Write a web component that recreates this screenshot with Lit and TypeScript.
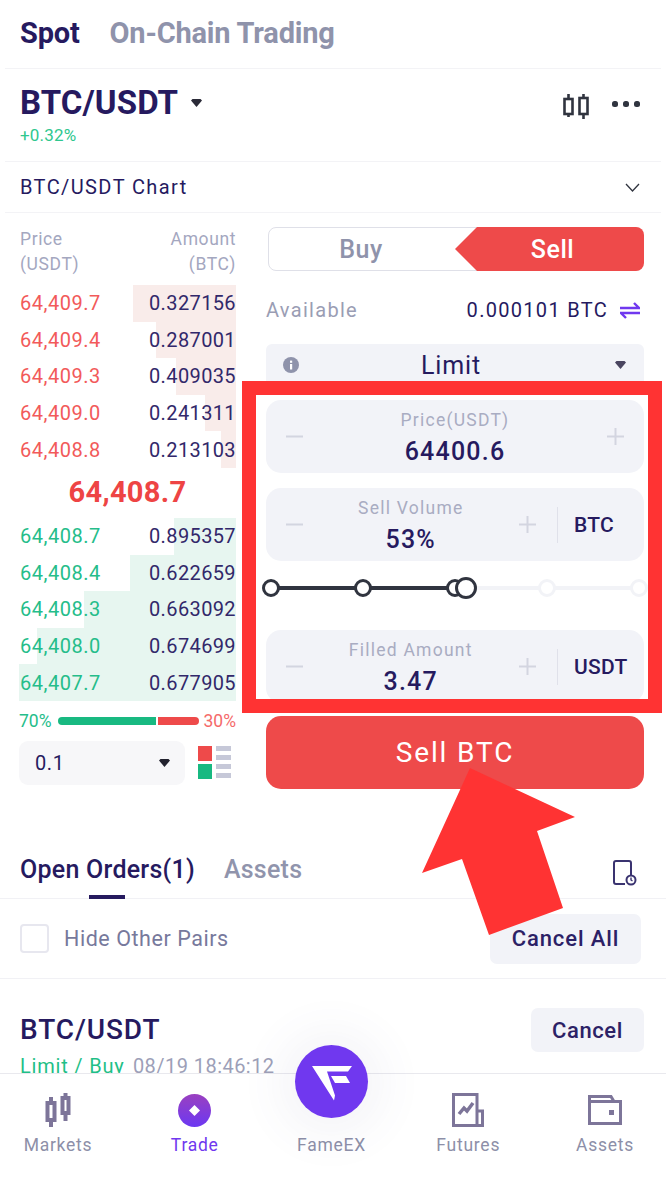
import { LitElement, html, css, svg } from "lit";
import { customElement } from "lit/decorators.js";

const asks = [
  ["64,409.7", "0.327156", 103],
  ["64,409.4", "0.287001", 80],
  ["64,409.3", "0.409035", 60],
  ["64,409.0", "0.241311", 31],
  ["64,408.8", "0.213103", 15],
];
const bids = [
  ["64,408.7", "0.895357", 62],
  ["64,408.4", "0.622659", 106],
  ["64,408.3", "0.663092", 152],
  ["64,408.0", "0.674699", 199],
  ["64,407.7", "0.677905", 217],
];
const stops = [
  [0, true],
  [92, true],
  [184, true],
  [276, false],
  [368, false],
];

const candle = (c: string, w: number) => svg`
  <g fill="none" stroke=${c} stroke-width=${w}>
    <rect x="1.500" y="10" width="8" height="15" />
    <rect x="16.500" y="9" width="8" height="16" />
    <path d="M5.500 5v5M5.500 25v3M20.500 5v4M20.500 25v5" />
  </g>`;

@customElement("app-root")
export class AppRoot extends LitElement {
  static styles = css`
    :host {
      display: block;
      position: relative;
      width: 666px;
      height: 1178px;
      overflow: hidden;
      background: #fff;
      font-family: Roboto, "Liberation Sans", sans-serif;
      color: #261a5f;
    }
    .tabs {
      height: 68px;
      display: flex;
      align-items: center;
      gap: 30px;
      padding: 0 20px 2px;
      box-sizing: border-box;
      font-size: 29px;
      font-weight: 700;
      color: #8f93ab;
      letter-spacing: -0.2px;
    }
    .tabs .on { color: #261a5f; }
    .div { height: 1px; background: #f3f3f6; margin: 0 5px; }
    .pair {
      height: 92px;
      box-sizing: border-box;
      padding: 15px 26px 0 20px;
      display: flex;
      justify-content: space-between;
    }
    .pair h1 {
      margin: 0;
      font-size: 33px;
      line-height: 38px;
      font-weight: 700;
      display: flex;
      align-items: center;
      gap: 13px;
      letter-spacing: 0.1px;
    }
    .change { font-size: 17px; line-height: 22px; color: #2fc78f; margin-top: 2px; letter-spacing: 0.2px; }
    .pair-icons { display: flex; align-items: center; gap: 22px; height: 38px; padding-top: 1px; }
    .chart {
      height: 50px;
      display: flex;
      align-items: center;
      justify-content: space-between;
      padding: 0 26px 0 20px;
      font-size: 20px;
      letter-spacing: 1.4px;
    }
    .main {
      display: grid;
      grid-template-columns: 217px 378px;
      column-gap: 30px;
      padding: 0 0 0 19px;
      height: 632px;
    }
    .book-head {
      height: 72px;
      box-sizing: border-box;
      padding-top: 14px;
      padding-left: 1px;
      display: flex;
      justify-content: space-between;
      font-size: 17.5px;
      line-height: 25px;
      color: #a4a7bf;
      letter-spacing: 0.6px;
    }
    .book-head div:last-child { text-align: right; }
    .row {
      position: relative;
      height: 36.6px;
      padding-left: 1px;
      display: flex;
      align-items: center;
      justify-content: space-between;
      font-size: 20px;
    }
    .row span { position: relative; }
    .bar { position: absolute; top: 0; right: 0; bottom: 0; }
    .ask .bar { background: #f9ecea; }
    .bid .bar { background: #e7f6f0; }
    .ask .p { color: #f25a5a; letter-spacing: 0.5px; }
    .bid .p { color: #25bd8a; letter-spacing: 0.5px; }
    .q { color: #32286a; letter-spacing: 0.38px; }
    .mid {
      height: 50px;
      box-sizing: border-box;
      padding-top: 3px;
      font-size: 29px;
      font-weight: 700;
      line-height: 42px;
      text-align: center;
      color: #ee4444;
      letter-spacing: 0.3px;
    }
    .ratio {
      height: 40px;
      display: flex;
      align-items: center;
      justify-content: space-between;
      font-size: 17.5px;
    }
    .ratio .g { color: #25bd8a; }
    .ratio .r { color: #f56a6a; }
    .ratio-bar { display: flex; gap: 2px; width: 141px; height: 8px; margin-left: 1px; }
    .ratio-bar i:first-child { flex: 98; background: #18b981; border-radius: 4px 0 0 4px; }
    .ratio-bar i:last-child { flex: 41; background: #ee4a4a; border-radius: 0 4px 4px 0; }
    .depth { display: flex; align-items: center; justify-content: space-between; height: 44px; padding-right: 5px; }
    .select {
      width: 166px;
      height: 44px;
      box-sizing: border-box;
      border-radius: 9px;
      background: #f7f7f9;
      display: flex;
      align-items: center;
      justify-content: space-between;
      padding: 0 15px 0 16px;
      font-size: 20px;
      letter-spacing: 0.6px;
    }
    .toggle {
      margin-top: 14px;
      height: 44px;
      margin-left: 2px;
      margin-right: 1px;
      box-sizing: border-box;
      border: 1.5px solid #dfe0e8;
      border-radius: 8px;
      position: relative;
      display: flex;
      font-size: 25px;
      font-weight: 500;
      align-items: center;
      letter-spacing: 0.6px;
    }
    .toggle .buy { width: 184px; text-align: center; color: #8f93ab; }
    .toggle svg { position: absolute; left: 186px; top: -1.5px; }
    .toggle .sell { position: absolute; left: 194px; right: 0; text-align: center; color: #fff; }
    .avail {
      height: 73px;
      padding-right: 4px;
      padding-top: 5px;
      display: flex;
      align-items: center;
      justify-content: space-between;
      font-size: 20px;
      letter-spacing: 1.3px;
      box-sizing: border-box;
    }
    .avail .l { color: #9a9db4; }
    .avail .v { display: flex; align-items: center; gap: 12px; }
    .limit {
      height: 44px;
      border-radius: 6px;
      background: #f2f3f8;
      display: flex;
      align-items: center;
      justify-content: space-between;
      padding: 0 18px 2px 17px;
      font-size: 25px;
      letter-spacing: 0.9px;
      box-sizing: border-box;
    }
    .limit span { margin-right: 12px; }
    .field {
      height: 73px;
      border-radius: 15px;
      background: #f2f3f8;
      display: flex;
      align-items: center;
      padding: 0 20px;
      box-sizing: border-box;
      margin-top: 15px;
    }
    .field.first { margin-top: 12px; }
    .field .mid-col { flex: 1; text-align: center; padding-top: 4px; }
    .lab { font-size: 17.5px; line-height: 22px; color: #a9acc2; letter-spacing: 1.25px; }
    .val { font-size: 25px; line-height: 34px; font-weight: 500; letter-spacing: 1.2px; margin-top: 4px; }
    .sep { width: 1.5px; height: 36px; background: #e0e1ea; margin: 0 16px 0 21px; }
    .unit { font-size: 21px; font-weight: 500; width: 56px; letter-spacing: 0.3px; margin-right: -6px; }
    .slider { position: relative; height: 54px; }
    .track { position: absolute; top: 25px; height: 4px; }
    .track.a { left: 5px; width: 195px; background: #30343f; }
    .track.b { left: 200px; width: 172px; background: #f2f3f7; }
    .dot {
      position: absolute;
      top: 18px;
      width: 18px;
      height: 18px;
      box-sizing: border-box;
      border-radius: 50%;
      background: #fff;
      border: 3.5px solid #f2f3f7;
    }
    .dot.on { border-color: #30343f; }
    .knob {
      position: absolute;
      left: 189px;
      top: 16px;
      width: 22px;
      height: 22px;
      box-sizing: border-box;
      border-radius: 50%;
      background: #fff;
      border: 3.5px solid #30343f;
    }
    .sellbtn {
      margin-top: 13px;
      height: 73px;
      border-radius: 15px;
      background: #ee4a4a;
      color: #fff;
      display: flex;
      align-items: center;
      justify-content: center;
      font-size: 28px;
      letter-spacing: 1.85px;
    }
    .order-tabs {
      height: 53px;
      display: flex;
      align-items: flex-start;
      padding: 5px 29px 0 20px;
      position: relative;
      font-size: 25px;
      font-weight: 500;
      line-height: 40px;
      gap: 29px;
      color: #9094ac;
      box-sizing: border-box;
      letter-spacing: 0.25px;
    }
    .order-tabs .on { color: #261a5f; position: relative; }
    .order-tabs .on::after {
      content: "";
      position: absolute;
      left: 69px;
      bottom: -9px;
      width: 36px;
      height: 4px;
      background: #261a5f;
    }
    .order-tabs svg { margin-left: auto; margin-top: 10px; }
    .div2 { height: 1px; background: #f1f1f5; }
    .hide {
      height: 79px;
      display: flex;
      align-items: center;
      padding: 0 25px 0 20px;
      box-sizing: border-box;
      font-size: 21.5px;
      letter-spacing: 0.55px;
      color: #77799c;
    }
    .check {
      width: 29px;
      height: 29px;
      box-sizing: border-box;
      border: 2px solid #e7e7ef;
      border-radius: 4px;
      margin-right: 15px;
    }
    .btn {
      margin-left: auto;
      background: #f2f3f8;
      border-radius: 7px;
      color: #2c2166;
      font-weight: 500;
      display: flex;
      align-items: center;
      justify-content: center;
    }
    .hide .btn { width: 151px; height: 50px; font-size: 22px; letter-spacing: 0.9px; }
    .order { padding: 26px 22px 0 20px; display: flex; justify-content: space-between; height: 100px; box-sizing: border-box; }
    .order h2 { margin: 0; font-size: 28px; font-weight: 500; line-height: 50px; letter-spacing: 0.9px; }
    .order .btn { width: 113px; height: 44px; font-size: 22px; margin-top: 3px; letter-spacing: 0.6px; }
    .sub { font-size: 20px; line-height: 24px; margin-top: -1px; letter-spacing: 0.45px; color: #9d9fb8; white-space: nowrap; }
    .sub b { font-weight: 400; color: #1fbf87; margin-right: 3px; letter-spacing: 0.8px; }
    nav {
      position: absolute;
      left: 0;
      right: 0;
      bottom: 0;
      height: 105px;
      background: #fff;
      border-top: 1.5px solid #e9e9ee;
      box-sizing: border-box;
      display: flex;
      justify-content: space-between;
      padding: 0 21px 0 18px;
    }
    .item {
      width: 80px;
      display: flex;
      flex-direction: column;
      align-items: center;
      font-size: 17.5px;
      letter-spacing: 0.75px;
      color: #8d8fa8;
    }
    .item .ic { height: 36px; margin-top: 18px; display: flex; align-items: center; }
    .item .t { margin-top: 5px; line-height: 24px; white-space: nowrap; }
    .item.act .t { color: #7038ef; }
    .logo {
      position: absolute;
      left: 295px;
      top: 1045px;
      width: 73px;
      height: 73px;
      border-radius: 50%;
      background: #7038ef;
      box-shadow: 0 2px 44px 18px rgba(90, 80, 130, 0.06);
    }
    .mark { position: absolute; left: 242px; top: 381px; width: 420px; height: 332px; border: 14px solid #ff3333; box-sizing: border-box; }
    .arrow { position: absolute; left: 0; top: 0; }
  `;

  private caret(fill = "#2b2b38", w = 11) {
    return html`<svg width=${w} height="8" viewBox="0 0 11 8"><path d="M0 1.500 1.500 0h8L11 1.500 5.500 8z" fill=${fill} /></svg>`;
  }

  private book(rows: (string | number)[][], cls: string) {
    return rows.map(
      (r) => html`<div class="row ${cls}">
        <div class="bar" style="width:${r[2]}px"></div>
        <span class="p">${r[0]}</span><span class="q">${r[1]}</span>
      </div>`
    );
  }

  private pm(w = 17, c = "#d3d5e0") {
    return {
      minus: html`<svg width=${w} height="17" viewBox="0 0 17 17"><path d="M0 8.500h17" stroke=${c} stroke-width="2" /></svg>`,
      plus: html`<svg width=${w} height="17" viewBox="0 0 17 17"><path d="M0 8.500h17M8.500 0v17" stroke=${c} stroke-width="2" /></svg>`,
    };
  }

  render() {
    const { minus, plus } = this.pm();
    return html`
      <div class="tabs"><span class="on">Spot</span><span>On-Chain Trading</span></div>
      <div class="div"></div>
      <div class="pair">
        <div>
          <h1>BTC/USDT ${this.caret()}</h1>
          <div class="change">+0.32%</div>
        </div>
        <div class="pair-icons">
          <svg width="27" height="30" viewBox="0 0 27 30">${candle("#30343f", 2.6)}</svg>
          <svg width="28" height="8" viewBox="0 0 28 8" fill="#30343f"><rect x="0" y="1" width="6" height="6" rx="2.500" /><rect x="11" y="1" width="6" height="6" rx="2.500" /><rect x="22" y="1" width="6" height="6" rx="2.500" /></svg>
        </div>
      </div>
      <div class="div"></div>
      <div class="chart">
        <span>BTC/USDT Chart</span>
        <svg width="15" height="9" viewBox="0 0 15 9"><path d="M1 1l6.500 7L14 1" fill="none" stroke="#30343f" stroke-width="1.300" /></svg>
      </div>
      <div class="div"></div>
      <div class="main">
        <div>
          <div class="book-head"><div>Price<br />(USDT)</div><div>Amount<br />(BTC)</div></div>
          ${this.book(asks, "ask")}
          <div class="mid">64,408.7</div>
          ${this.book(bids, "bid")}
          <div class="ratio">
            <span class="g">70%</span>
            <div class="ratio-bar"><i></i><i></i></div>
            <span class="r">30%</span>
          </div>
          <div class="depth">
            <div class="select"><span>0.1</span>${this.caret("#22222e")}</div>
            <svg width="33" height="33" viewBox="0 0 33 33">
              <rect width="14" height="15" fill="#ee4a4a" />
              <rect y="18" width="14" height="15" fill="#18b981" />
              <g fill="#c6c8d8">
                <rect x="18" width="15" height="5" /><rect x="18" y="9" width="15" height="5" />
                <rect x="18" y="18" width="15" height="5" /><rect x="18" y="27" width="15" height="5" />
              </g>
            </svg>
          </div>
        </div>
        <div>
          <div class="toggle">
            <span class="buy">Buy</span>
            <svg width="189" height="44" viewBox="0 0 189 44"><path d="M0 22 22 0h159a8 8 0 0 1 8 8v28a8 8 0 0 1-8 8H22z" fill="#ee4a4a" /></svg>
            <span class="sell">Sell</span>
          </div>
          <div class="avail">
            <span class="l">Available</span>
            <span class="v">0.000101 BTC
              <svg width="20" height="17" viewBox="0 0 20 17" fill="none" stroke="#7038ef" stroke-width="2.400"><path d="M0 6h19L14 1M20 11H1l5 5" /></svg>
            </span>
          </div>
          <div class="limit">
            <svg width="16" height="16" viewBox="0 0 16 16"><circle cx="8" cy="8" r="8" fill="#8f93ab" /><rect x="7" y="7" width="2.200" height="5.500" fill="#fff" /><rect x="7" y="3.600" width="2.200" height="2.200" fill="#fff" /></svg>
            <span>Limit</span>
            ${this.caret("#4a4560", 11)}
          </div>
          <div class="field first">
            ${minus}
            <div class="mid-col"><div class="lab">Price(USDT)</div><div class="val">64400.6</div></div>
            ${plus}
          </div>
          <div class="field">
            ${minus}
            <div class="mid-col"><div class="lab">Sell Volume</div><div class="val">53%</div></div>
            ${plus}
            <div class="sep"></div><div class="unit">BTC</div>
          </div>
          <div class="slider">
            <div class="track a"></div><div class="track b"></div>
            ${stops.map(
              ([x, on]) => html`<div class="dot ${on ? "on" : ""}" style="left:${(x as number) - 4}px"></div>`
            )}
            <div class="knob"></div>
          </div>
          <div class="field">
            ${minus}
            <div class="mid-col"><div class="lab">Filled Amount</div><div class="val">3.47</div></div>
            ${plus}
            <div class="sep"></div><div class="unit">USDT</div>
          </div>
          <div class="sellbtn">Sell BTC</div>
        </div>
      </div>
      <div class="order-tabs">
        <span class="on">Open Orders(1)</span><span>Assets</span>
        <svg width="24" height="26" viewBox="0 0 24 26" fill="none" stroke="#3a3370" stroke-width="2">
          <path d="M12 24H3a2 2 0 0 1-2-2V3a2 2 0 0 1 2-2h13a2 2 0 0 1 2 2v12" />
          <circle cx="18" cy="20" r="4.500" /><path d="M18 17.500V20l1.500 1" stroke-width="1.400" />
        </svg>
      </div>
      <div class="div2"></div>
      <div class="hide">
        <div class="check"></div><span>Hide Other Pairs</span>
        <div class="btn">Cancel All</div>
      </div>
      <div class="div2"></div>
      <div class="order">
        <div>
          <h2>BTC/USDT</h2>
          <div class="sub"><b>Limit / Buy</b> 08/19 18:46:12</div>
        </div>
        <div class="btn">Cancel</div>
      </div>
      <nav>
        <div class="item">
          <div class="ic"><svg width="27" height="34" viewBox="0 0 27 34" fill="none" stroke="#7d7599" stroke-width="4">
            <rect x="2.500" y="10" width="7" height="17" /><rect x="17.500" y="5" width="6" height="15" />
            <path d="M6 4v6M6 27v7M20.500 0v5M20.500 20v8" />
          </svg></div>
          <div class="t">Markets</div>
        </div>
        <div class="item act">
          <div class="ic"><svg width="33" height="33" viewBox="0 0 33 33">
            <defs><linearGradient id="tg" x1="0" y1="0" x2="0" y2="1"><stop offset="0" stop-color="#9a40c0" /><stop offset="1" stop-color="#6c38f2" /></linearGradient></defs>
            <circle cx="16.500" cy="16.500" r="16.500" fill="url(#tg)" />
            <path d="M16.500 11l5.500 5.500-5.500 5.500-5.500-5.500z" fill="#fff" />
          </svg></div>
          <div class="t">Trade</div>
        </div>
        <div class="item">
          <div class="ic"></div>
          <div class="t">FameEX</div>
        </div>
        <div class="item">
          <div class="ic"><svg width="32" height="34" viewBox="0 0 32 34" fill="none" stroke="#7d7599" stroke-width="3">
            <path d="M24 32.500H1.500v-31H25v31M25 18h5.500v14.500H24" />
            <path d="M7 21l5-6 3 3 6-8" stroke-width="3.500" />
          </svg></div>
          <div class="t">Futures</div>
        </div>
        <div class="item">
          <div class="ic"><svg width="34" height="30" viewBox="0 0 34 30" fill="none" stroke="#7d7599" stroke-width="3">
            <path d="M1.500 28.500V1.500H23l3 5h6.500v22zM1.500 6.500H26" />
            <rect x="21" y="15" width="5" height="5" fill="#7d7599" stroke="none" />
          </svg></div>
          <div class="t">Assets</div>
        </div>
      </nav>
      <div class="logo">
        <svg width="73" height="73" viewBox="0 0 73 73" fill="#fff">
          <path d="M17 21h40l-4 5.500H32l8 24-1 5z" />
          <path d="M36 31h15l4 7H40z" />
        </svg>
      </div>
      <div class="mark"></div>
      <svg class="arrow" width="666" height="1178" viewBox="0 0 666 1178">
        <path d="M470 768 575 817 537 831 563 908 489 935 462 859 422 873z" fill="#ff3333" />
      </svg>
    `;
  }
}
